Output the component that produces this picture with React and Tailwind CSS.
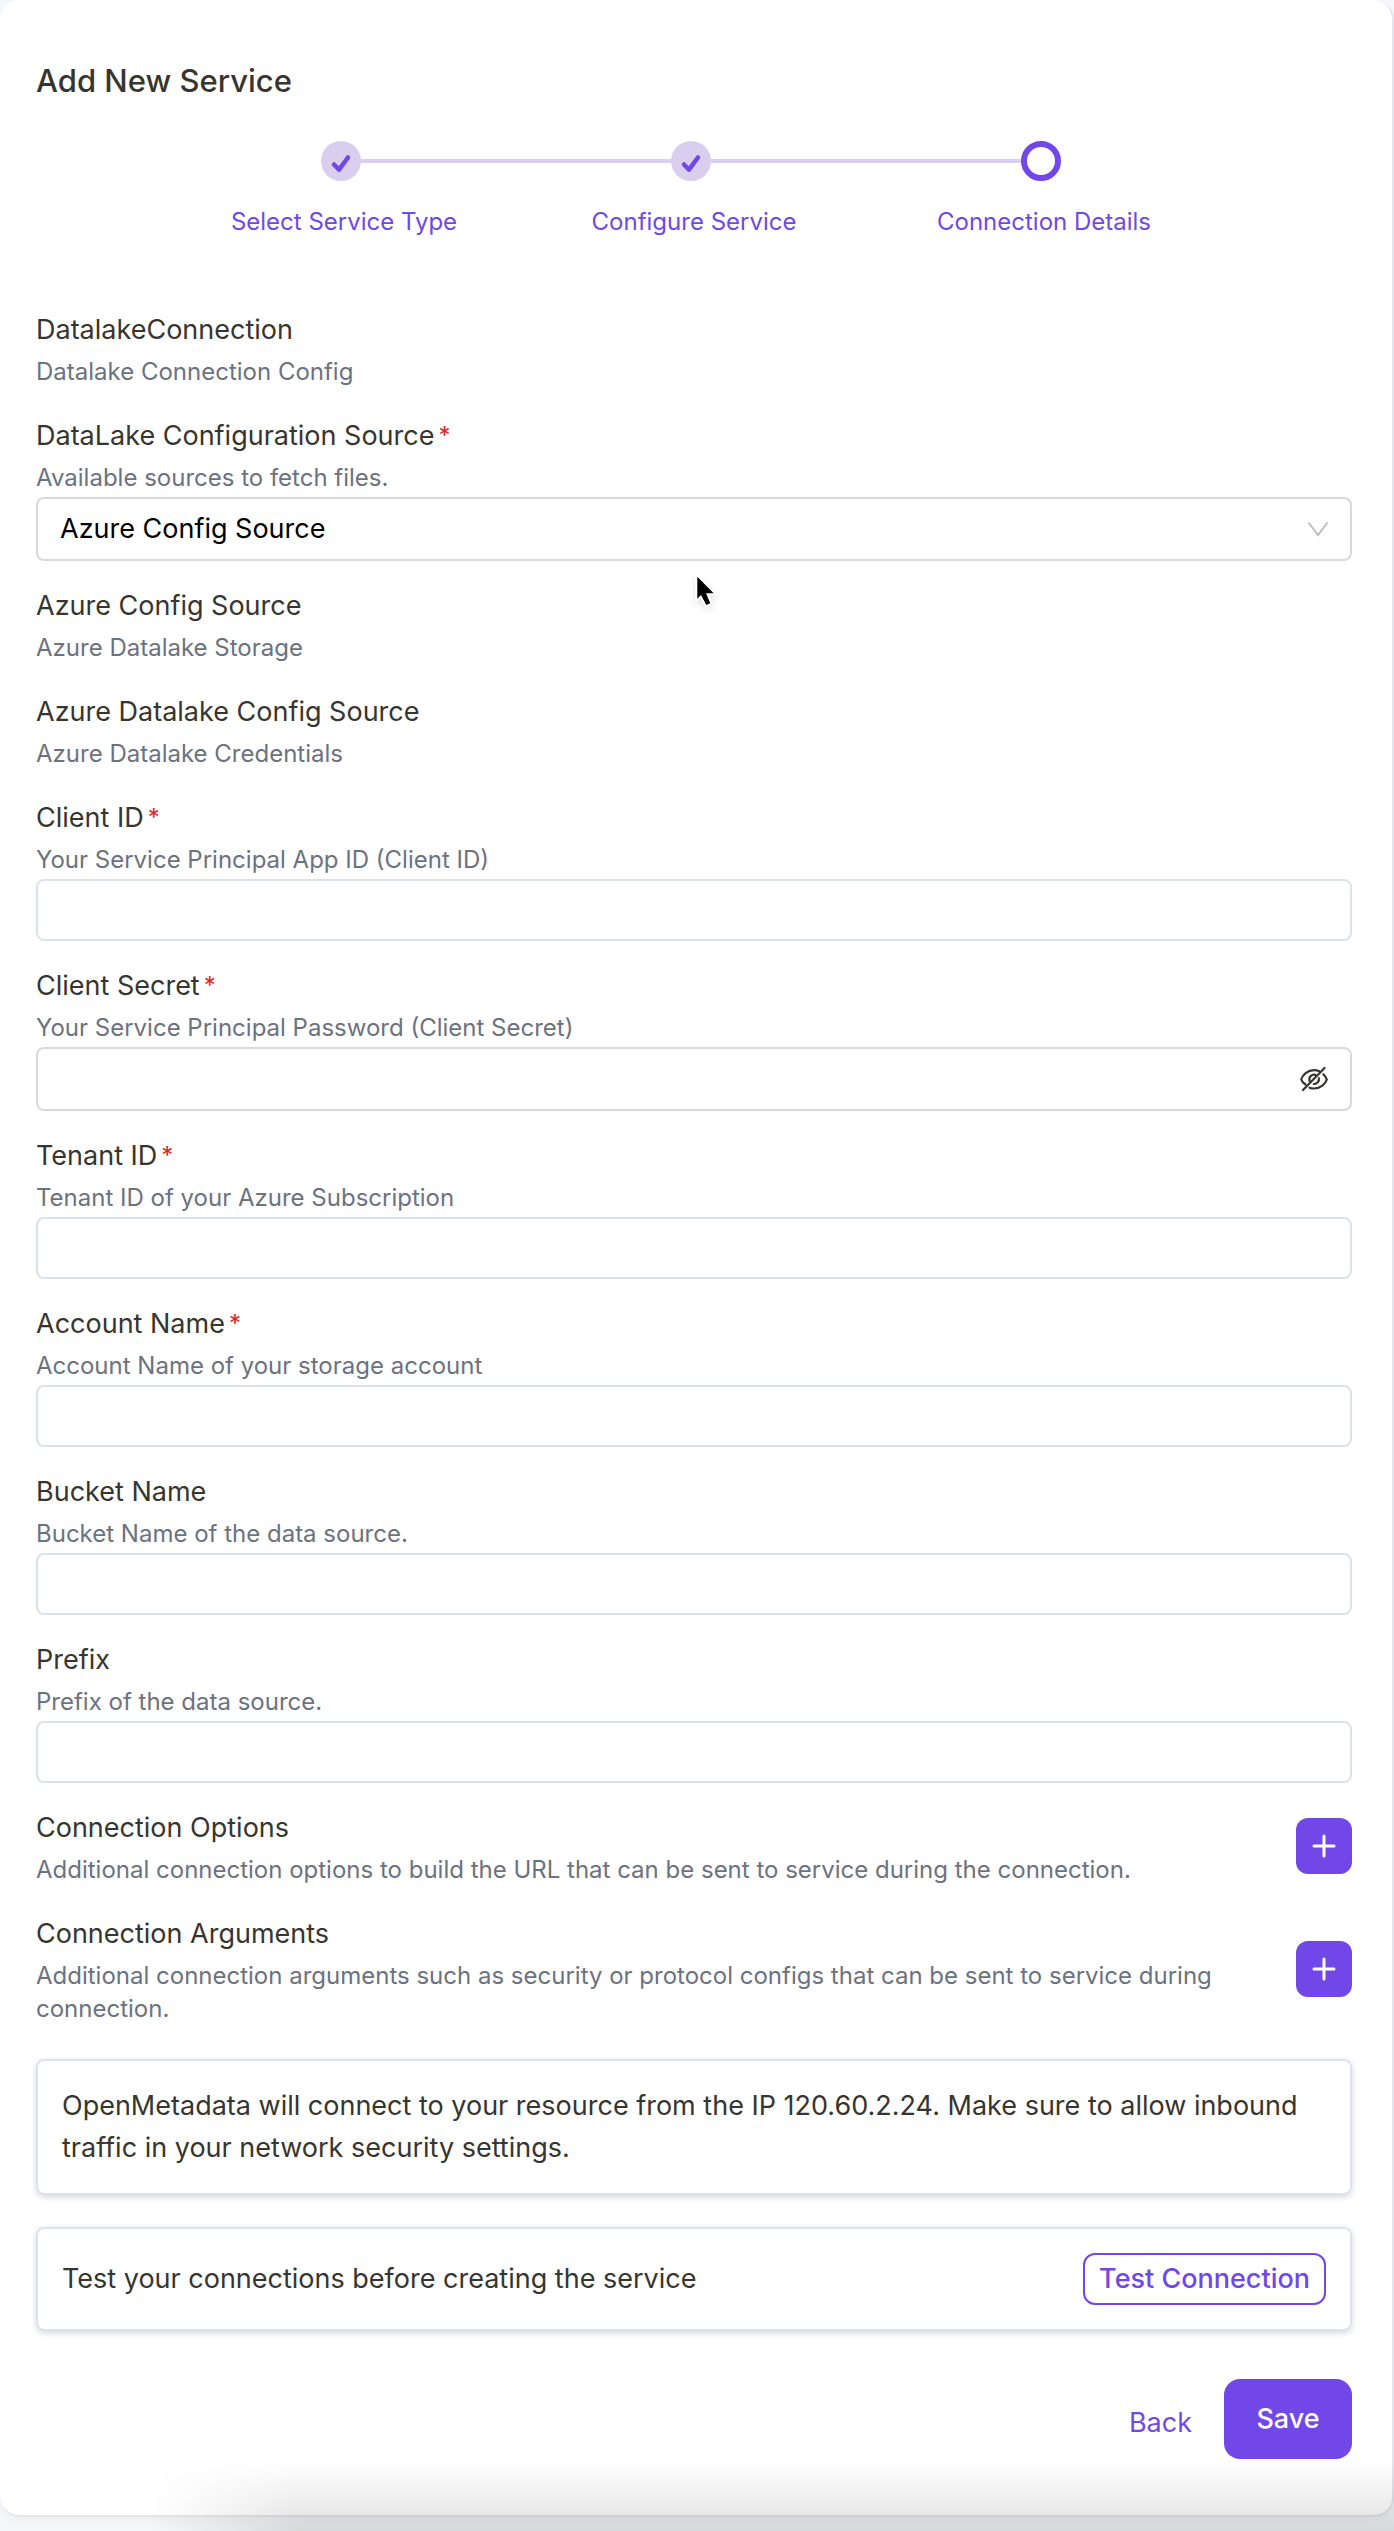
import { useState } from "react";

const STEPS = [
  { title: "Select Service Type", done: true },
  { title: "Configure Service", done: true },
  { title: "Connection Details", done: false },
];

function Stepper() {
  return (
    <div className="mt-10 pr-1.5">
      <ol className="mx-auto grid w-[1050px] max-w-full grid-cols-3">
        {STEPS.map((step, i) => (
          <li key={step.title} className="flex flex-col items-center">
            <div className="flex w-full items-center">
              <span className={i === 0 ? "h-1 flex-1" : "h-1 flex-1 bg-[#d9ceee]"} />
              {step.done ? (
                <span className="flex size-10 items-center justify-center rounded-full bg-[#d9ceee]">
                  <svg viewBox="0 0 40 40" className="size-10" fill="none" stroke="#7147e8" strokeWidth="4.5" strokeLinecap="round" strokeLinejoin="round" aria-hidden="true">
                    <path d="M13 23.500 18 28.700 27 16.500" />
                  </svg>
                </span>
              ) : (
                <span className="size-10 rounded-full border-6 border-[#7147e8] bg-white" />
              )}
              <span className={i === STEPS.length - 1 ? "h-1 flex-1" : "h-1 flex-1 bg-[#d9ceee]"} />
            </div>
            <span className="mt-6 pl-1.5 text-2xl leading-[33px] whitespace-nowrap text-[#7147e8]">{step.title}</span>
          </li>
        ))}
      </ol>
    </div>
  );
}

function Heading({ label, desc, required, htmlFor }) {
  const Tag = htmlFor ? "label" : "h2";
  return (
    <div className="pb-[3px]">
      <Tag htmlFor={htmlFor} className="flex text-[27px] leading-[50px]">
        {label}
        {required && <span className="ml-1 text-2xl leading-[50px] text-[#e5231c]">*</span>}
      </Tag>
      <p className="text-2xl leading-[33px] text-[#6b7280]">{desc}</p>
    </div>
  );
}

function TextField({ id, ...rest }) {
  return (
    <div>
      <Heading htmlFor={id} {...rest} />
      <input id={id} type="text" className="block h-[62px] w-full rounded-lg border-2 border-[#dce1ec] bg-white px-6 text-[27px] outline-none" />
    </div>
  );
}

function SourceField() {
  return (
    <div>
      <Heading htmlFor="source" label="DataLake Configuration Source" desc="Available sources to fetch files." required />
      <div className="relative">
        <select id="source" className="block h-16 w-full appearance-none rounded-lg border-2 border-[#d9d9d9] bg-white px-[22px] text-[27px] text-black outline-none">
          <option>Azure Config Source</option>
        </select>
        <svg viewBox="0 0 24 24" className="pointer-events-none absolute top-5 right-[22px] size-6" fill="none" stroke="#bfbfbf" strokeWidth="2" aria-hidden="true">
          <path d="M2.500 5.500 12 18 21.500 5.500" />
        </svg>
        <svg viewBox="-2 -1 26 38" className="pointer-events-none absolute top-[76px] left-1/2 h-[38px] w-[26px] drop-shadow-md" aria-hidden="true">
          <path d="M1.300 2.700v22L5 21l5.300 10 4-1.700-4.300-10h7.700z" fill="#000" stroke="#fff" strokeWidth="4" paintOrder="stroke" />
        </svg>
      </div>
    </div>
  );
}

function SecretField() {
  const [visible, setVisible] = useState(false);
  return (
    <div>
      <Heading htmlFor="secret" label="Client Secret" desc="Your Service Principal Password (Client Secret)" required />
      <div className="flex h-16 items-center rounded-lg border-2 border-[#d9d9d9] bg-white pr-[22px] pl-6">
        <input id="secret" type={visible ? "text" : "password"} className="h-full min-w-0 flex-1 text-[27px] outline-none" />
        <button type="button" aria-label="Toggle password visibility" onClick={() => setVisible(!visible)}>
          <svg viewBox="0 0 28 28" className="size-7" fill="none" stroke="#37352f" strokeWidth="2.200" strokeLinecap="round" aria-hidden="true">
            <path d="M3 25 24.500 3" />
            <path d="M5.500 19.500C3 17.800 1.500 15.500 1.200 14.500 2.500 10 7.500 5.200 14 5.200c2 0 3.800.400 5.300 1.100" />
            <path d="M23.300 9.300c1.900 1.700 3.100 3.800 3.500 5.200-1.300 4.500-6.300 9-12.800 9-1.600 0-3.100-.300-4.500-.800" />
            <path d="M9.700 16.200c-1.400-3.700 1.800-7.300 5.700-6.300" />
            <path d="M18.800 13.200c.800 3-1.800 6-5 5.800" />
          </svg>
        </button>
      </div>
    </div>
  );
}

function AddRow({ label, desc }) {
  return (
    <div className="flex items-center justify-between gap-6">
      <Heading label={label} desc={desc} />
      <button type="button" aria-label={"Add " + label} className="flex size-14 shrink-0 items-center justify-center rounded-xl bg-[#7147e8]">
        <svg viewBox="0 0 24 24" className="size-6" stroke="#fff" strokeWidth="3" strokeLinecap="round" aria-hidden="true">
          <path d="M12 2v20M2 12h20" />
        </svg>
      </button>
    </div>
  );
}

export default function App() {
  return (
    <div className="relative overflow-hidden bg-[#f5f7fa] pb-[14px] font-['Inter',sans-serif] text-[#37352f]">
      <main className="rounded-[20px] border-r-2 border-b-2 border-[#e4e4ea] bg-white pt-[61px] pr-10 pb-14 pl-9 shadow-[0_4px_8px_rgba(0,0,0,0.04)]">
        <h1 className="text-[31px] leading-[40px] font-medium">Add New Service</h1>
        <Stepper />
        <form className="mt-[67px]" onSubmit={(e) => e.preventDefault()}>
          <div className="flex flex-col gap-5">
            <Heading label="DatalakeConnection" desc="Datalake Connection Config" />
            <SourceField />
            <Heading label="Azure Config Source" desc="Azure Datalake Storage" />
            <Heading label="Azure Datalake Config Source" desc="Azure Datalake Credentials" />
            <TextField id="client" label="Client ID" desc="Your Service Principal App ID (Client ID)" required />
            <SecretField />
            <TextField id="tenant" label="Tenant ID" desc="Tenant ID of your Azure Subscription" required />
            <TextField id="account" label="Account Name" desc="Account Name of your storage account" required />
            <TextField id="bucket" label="Bucket Name" desc="Bucket Name of the data source." />
            <TextField id="prefix" label="Prefix" desc="Prefix of the data source." />
            <AddRow label="Connection Options" desc="Additional connection options to build the URL that can be sent to service during the connection." />
            <AddRow label="Connection Arguments" desc="Additional connection arguments such as security or protocol configs that can be sent to service during connection." />
          </div>
          <div className="mt-[31px] flex flex-col gap-8 text-[27px] leading-[42px]">
            <p className="rounded-lg border-2 border-[#dce1ec] p-6 shadow-[0_2px_6px_rgba(0,0,0,0.16)]">
              OpenMetadata will connect to your resource from the IP 120.60.2.24. Make sure to allow inbound traffic in your network security settings.
            </p>
            <div className="flex items-center justify-between rounded-lg border-2 border-[#dce1ec] p-6 shadow-[0_2px_6px_rgba(0,0,0,0.16)]">
              <p>Test your connections before creating the service</p>
              <button type="button" className="h-[52px] rounded-xl border-2 border-[#7147e8] px-3.5 leading-[48px] font-medium text-[#7147e8]">Test Connection</button>
            </div>
          </div>
          <div className="mt-12 flex items-center justify-end text-[27px]">
            <button type="button" className="h-20 px-8 pt-2 text-[#7147e8]">Back</button>
            <button type="submit" className="h-20 w-32 rounded-2xl bg-[#7147e8] font-medium text-white">Save</button>
          </div>
        </form>
      </main>
      <div className="pointer-events-none absolute inset-x-0 bottom-0 h-[70px] bg-linear-to-t from-black/12 to-transparent [mask-image:linear-gradient(to_right,transparent_150px,black_300px)]" />
    </div>
  );
}
